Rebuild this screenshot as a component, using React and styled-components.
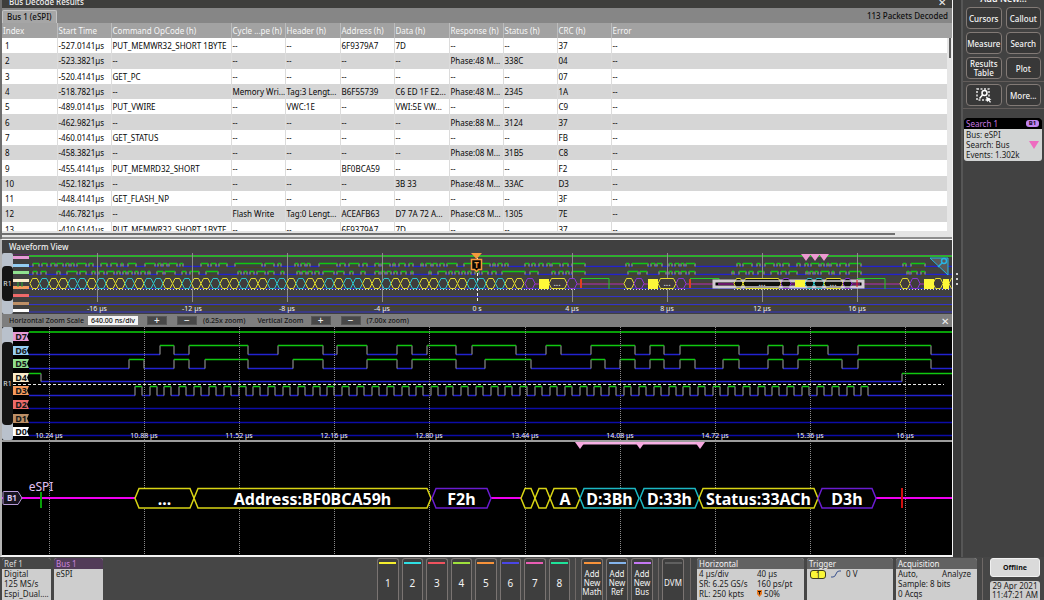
import React, { useState } from 'react'
import styled, { createGlobalStyle } from 'styled-components'

const decodeRows = [
  ['1', '-527.0141µs', 'PUT_MEMWR32_SHORT 1BYTE', '--', '--', '6F9379A7', '7D', '--', '--', '37', '--'],
  ['2', '-523.3821µs', '--', '--', '--', '--', '--', 'Phase:48 M...', '338C', '04', '--'],
  ['3', '-520.4141µs', 'GET_PC', '--', '--', '--', '--', '--', '--', '07', '--'],
  ['4', '-518.7821µs', '--', 'Memory Wri...', 'Tag:3 Lengt...', 'B6F55739', 'C6 ED 1F E2...', 'Phase:48 M...', '2345', '1A', '--'],
  ['5', '-489.0141µs', 'PUT_VWIRE', '--', 'VWC:1E', '--', 'VWI:5E VW...', '--', '--', 'C9', '--'],
  ['6', '-462.9821µs', '--', '--', '--', '--', '--', 'Phase:88 M...', '3124', '37', '--'],
  ['7', '-460.0141µs', 'GET_STATUS', '--', '--', '--', '--', '--', '--', 'FB', '--'],
  ['8', '-458.3821µs', '--', '--', '--', '--', '--', 'Phase:08 M...', '31B5', 'C8', '--'],
  ['9', '-455.4141µs', 'PUT_MEMRD32_SHORT', '--', '--', 'BF0BCA59', '--', '--', '--', 'F2', '--'],
  ['10', '-452.1821µs', '--', '--', '--', '--', '3B 33', 'Phase:48 M...', '33AC', 'D3', '--'],
  ['11', '-448.4141µs', 'GET_FLASH_NP', '--', '--', '--', '--', '--', '--', '3F', '--'],
  ['12', '-446.7821µs', '--', 'Flash Write', 'Tag:0 Lengt...', 'ACEAFB63', 'D7 7A 72 A...', 'Phase:C8 M...', '1305', '7E', '--'],
  ['13', '-410.6141µs', 'PUT_MEMWR32_SHORT 1BYTE', '--', '--', '6F9379A7', '7D', '--', '--', '37', '--'],
]

const columns = [
  ['Index', 55],
  ['Start Time', 54],
  ['Command OpCode (h)', 120],
  ['Cycle ...pe (h)', 54],
  ['Header (h)', 55],
  ['Address (h)', 54],
  ['Data (h)', 55],
  ['Response (h)', 54],
  ['Status (h)', 54],
  ['CRC (h)', 54],
  ['Error', null],
]

const lanes = [
  { name: 'D7', color: '#e79ad6' },
  { name: 'D6', color: '#93cdf3' },
  { name: 'D5', color: '#8fe08f' },
  { name: 'D4', color: '#fbeccb' },
  { name: 'D3', color: '#f79a5c' },
  { name: 'D2', color: '#ee6a6a' },
  { name: 'D1', color: '#bd8f66' },
  { name: 'D0', color: '#ffffff' },
]

// [start, end] of every high level
const d6 = [[160, 174], [189, 248], [278, 323], [337, 367], [397, 412], [427, 456], [472, 516], [546, 561], [591, 635], [650, 664], [680, 739], [768, 783], [798, 828], [858, 931]]
const d5 = [[129, 144], [174, 189], [205, 248], [293, 323], [367, 397], [412, 456], [485, 531], [591, 605], [620, 635], [650, 664], [680, 695], [723, 739], [768, 783], [798, 842], [858, 931]]
const d4 = [[29, 41], [902, 2400]]
const d3 = Array.from({ length: 50 }, (_, i) => {
  const x = Math.round(134.7 + i * 14.83)
  return [x, x + 7]
})

const overviewD6 = [[33, 39], [42, 47], [51, 55], [57, 63], [66, 69], [71, 74], [77, 86], [89, 93], [101, 107], [111, 117], [121, 123], [128, 136], [145, 155], [158, 161], [163, 167], [169, 177], [180, 183], [201, 208], [211, 216], [219, 227], [235, 262], [265, 274], [278, 281], [295, 298], [301, 305], [307, 310], [319, 337], [340, 345], [349, 359], [363, 367], [375, 379], [381, 390], [393, 395], [399, 405], [409, 413], [421, 423], [426, 431], [433, 437], [440, 444], [447, 457], [464, 490], [493, 495], [498, 502], [505, 508], [525, 529], [532, 535], [539, 543], [547, 550], [552, 560], [563, 568], [572, 585], [626, 629], [632, 648], [651, 655], [657, 662], [669, 672], [675, 679], [681, 684], [686, 695], [737, 740], [743, 752], [757, 760], [765, 774], [777, 780], [783, 789], [797, 800], [805, 808], [811, 819], [821, 824], [827, 829], [831, 837], [840, 846], [849, 861], [903, 906], [911, 925]]
const overviewD5 = [[33, 37], [41, 46], [57, 60], [67, 77], [80, 86], [92, 95], [99, 104], [107, 114], [117, 120], [123, 126], [128, 132], [135, 138], [141, 145], [148, 150], [157, 163], [165, 175], [182, 186], [190, 199], [206, 218], [238, 241], [244, 247], [250, 254], [257, 265], [268, 274], [281, 284], [297, 300], [302, 306], [308, 312], [315, 319], [323, 334], [337, 344], [350, 353], [361, 365], [375, 379], [381, 385], [387, 391], [394, 397], [401, 406], [411, 413], [429, 431], [438, 446], [449, 452], [455, 459], [462, 465], [468, 471], [475, 479], [482, 488], [492, 496], [502, 525], [530, 538], [552, 555], [559, 563], [566, 569], [572, 585], [628, 638], [640, 647], [659, 666], [669, 672], [675, 679], [681, 686], [689, 695], [732, 734], [739, 746], [749, 753], [758, 764], [771, 778], [781, 786], [789, 797], [806, 808], [810, 813], [815, 818], [821, 829], [832, 834], [840, 846], [849, 861], [907, 909], [911, 917], [921, 925]]

const YELLOW = '#d8d414'
const CYAN = '#1cb8c4'
const PURPLE = '#6a1cd0'

const packets = [
  { from: 135, to: 194, color: YELLOW, text: '...' },
  { from: 194, to: 431, color: YELLOW, text: 'Address:BF0BCA59h' },
  { from: 432, to: 491, color: PURPLE, text: 'F2h' },
  { from: 521, to: 535, color: YELLOW },
  { from: 535, to: 550, color: YELLOW },
  { from: 550, to: 580, color: YELLOW, text: 'A' },
  { from: 580, to: 639, color: CYAN, text: 'D:3Bh' },
  { from: 640, to: 699, color: CYAN, text: 'D:33h' },
  { from: 699, to: 818, color: YELLOW, text: 'Status:33ACh' },
  { from: 818, to: 876, color: PURPLE, text: 'D3h' },
]

const overviewPackets = [
  [525, 535, 'p'], [549, 567, 'y'], [567, 577, 'p'],
  [624, 634, 'y'], [634, 644, 'p'], [658, 676, 'y'], [676, 686, 'p'],
  [734, 743, 'y'], [743, 781, 'y'], [781, 791, 'p'],
  [805, 814, 'c'], [814, 824, 'c'], [824, 843, 'y'], [843, 852, 'p'],
  [900, 910, 'y'], [910, 920, 'p'], [933, 943, 'y'], [949, 959, 'y'],
]
const packetColor = { y: '#e2dc2c', c: '#2cc6cc', p: '#8a36d8' }

const gridTimes = ['10.24 µs', '10.88 µs', '11.52 µs', '12.16 µs', '12.80 µs', '13.44 µs', '14.08 µs', '14.72 µs', '15.36 µs', '16 µs']
const gridX = gridTimes.map((t, i) => Math.round(49 + i * 95.1))
const overviewTimes = ['-16 µs', '-12 µs', '-8 µs', '-4 µs', '0 s', '4 µs', '8 µs', '12 µs', '16 µs']

const channels = ['#f5ee2e', '#2fdfe4', '#f0525e', '#9fe03c', '#f7923a', '#4a46e6', '#ea5cb4', '#1fe39a']

function Wave({ highs, hi, lo, start = 29 }) {
  let green = ''
  let blue = ''
  let gray = ''
  let x = start
  highs.forEach(([a, b]) => {
    if (a > x) blue += `M${x} ${lo}H${a}`
    if (a > start) gray += `M${a} ${lo}V${hi}`
    green += `M${a} ${hi}H${b}`
    gray += `M${b} ${hi}V${lo}`
    x = b
  })
  blue += `M${x} ${lo}H2400`
  return (
    <g fill="none">
      <path d={blue} stroke="#2222d0" strokeWidth="1.500" />
      <path d={gray} stroke="#a4a4a4" />
      <path d={green} stroke="#10c810" strokeWidth="1.500" />
    </g>
  )
}

function Hex({ from, to, top, bottom, slant, color, fill, width = 1 }) {
  const mid = (top + bottom) / 2
  return (
    <path
      d={`M${from} ${mid}L${from + slant} ${top}H${to - slant}L${to} ${mid}L${to - slant} ${bottom}H${from + slant}Z`}
      stroke={color}
      strokeWidth={width}
      fill={fill}
    />
  )
}

function Overview() {
  const train = Array.from({ length: 52 }, (_, i) => 30 + i * 9.5)
  return (
    <Plot>
      <g transform="translate(-13 0)">
        <path d="M13 1.5H2400" stroke="#5a2a5e" />
        <path d="M29 14.5H2400M29 22.5H2400M29 30H2400M29 46H2400M29 53.5H2400" stroke="#4a441e" />
        <path d="M29 3H2400" stroke="#2fae2f" strokeWidth="2" />
        <Wave highs={overviewD6} hi={10.5} lo={13.5} />
        <Wave highs={overviewD5} hi={18.5} lo={21.5} />
        <path d="M29 35.5H2400M29 43.5H2400M29 51.5H2400M29 59H2400" stroke="#3434c8" strokeWidth="1" />
        {overviewTimes.map((t, i) => (
          <path
            key={t}
            d={`M${97 + i * 95}.5 0V49`}
            stroke={t === '0 s' ? '#f0f0f0' : '#8c8c8c'}
            strokeDasharray={t === '0 s' ? '3 2' : 'none'}
          />
        ))}
        <path d="M525 31H624M643 31H740M790 31H900M919 31H924" stroke="#b82cb8" strokeWidth="1" />
        <path d="M581 25.5H609V36M690 25.5H719V36M857 25.5H885V36" stroke="#28c828" fill="none" />
        <path d="M581 26V35M690 26V35" stroke="#e04020" strokeWidth="2" />
        {train.map((x, i) => (
          <Hex key={x} from={x} to={x + 9.5} top={25.5} bottom={35.5} slant={2.5} fill="#403c3c" color={i % 3 === 1 || i % 7 === 5 ? packetColor.c : packetColor.y} />
        ))}
        <rect x="714" y="28" width="149" height="6" fill="#000" stroke="#d0ccd0" strokeWidth="3" />
        <path d="M718 31H734M790 31H796M852 31H860" stroke="#d42cd4" />
        {overviewPackets.map(([a, b, c]) => (
          <Hex key={a} from={a} to={b} top={25.5} bottom={35.5} slant={2.5} fill={a > 713 && a < 860 ? '#10100c' : '#403c3c'} color={packetColor[c]} />
        ))}
        <path d="M718 28H861M718 34H861" stroke="#d0ccd0" strokeWidth="2" strokeOpacity=".75" />
        <path d="M857 27V34" stroke="#e02020" />
        <path d="M539 26h10v10h-10zM648 26h10v10h-10zM795 27h10v7h-10zM924 26h10v10h-10zM943 26h6v10h-6z" fill="#fdf838" />
        <path d="M32 36.5H525M526 36.5H577M624 36.5H686M734 36.5H853M900 36.5H950" stroke="#cfcfdf" strokeDasharray="1 2" />
        {[557, 667, 762, 833].map((x) => (
          <PlotText key={x} x={x} y="33" $size={9}>...</PlotText>
        ))}
        {lanes.map((l, i) => (
          <rect key={l.name} x="13" y={[3, 11, 18, 26, 33, 41, 49, 56][i]} width="16" height="3" fill={l.color} />
        ))}
        <path d="M22 29v5M18 29v5" stroke="#2fae2f" />
        {overviewTimes.map((t, i) => (
          <PlotText key={t} x={97 + i * 95} y="58" $size={7}>{t}</PlotText>
        ))}
        <path d="M801 1h10l-5 7zM810 1h10l-5 7zM819 1h10l-5 7z" fill="#ec98d0" />
        <path d="M471 0h11l-5.500 6z" fill="#f59a3c" />
        <path d="M471.500 6.500h10v10h-3l-2 2-2-2h-3z" fill="#0c0804" stroke="#f59a3c" strokeWidth="1.500" />
        <PlotText x="476.5" y="15" $size={8} $color="#f59a3c" $bold>T</PlotText>
        <path d="M930 5h18v17z" fill="#5a5a5a" stroke="#26b4e4" />
        <circle cx="944" cy="8" r="2.500" fill="none" stroke="#26b4e4" strokeWidth="1.500" />
        <path d="M942 10l-4 4" stroke="#26b4e4" strokeWidth="1.500" />
      </g>
    </Plot>
  )
}

function DigitalLanes() {
  const top = (i) => Math.round(5 + i * 13.6)
  return (
    <Plot>
      <g transform="translate(-13 0)">
        <path d="M29 5H2400" stroke="#08a008" strokeWidth="2" />
        <Wave highs={d6} hi={18.5} lo={27.5} />
        <Wave highs={d5} hi={32.5} lo={41.5} />
        <Wave highs={d4} hi={46.5} lo={54.5} />
        <Wave highs={d3} hi={59.5} lo={68.5} />
        <path d="M29 81.500H2400M29 95.500H2400M29 108.500H2400" stroke="#0c0ca8" strokeWidth="1.500" />
        {gridX.map((x) => (
          <path key={x} d={`M${x}.5 0V114`} stroke="#8a8a8a" strokeDasharray="1 1" />
        ))}
        <path d="M13 57.500H944" stroke="#e8e8e8" strokeDasharray="3 2" />
        {lanes.map((l, i) => (
          <g key={l.name}>
            <path d={`M13 ${top(i)}h16l-2 4.500l2 4.500h-16z`} fill={l.color} />
            <PlotText x="21" y={top(i) + 8} $size={9} $color="#181818" $bold>{l.name}</PlotText>
          </g>
        ))}
        {gridX.map((x, i) => (
          <PlotText key={x} x={x} y="111" $size={7}>{gridTimes[i]}</PlotText>
        ))}
      </g>
    </Plot>
  )
}

function BusLane() {
  return (
    <Plot>
      <g transform="translate(-2 -1)">
        {gridX.map((x) => (
          <path key={x} d={`M${x}.5 0V2000`} stroke="#8a8a8a" strokeDasharray="1 1" />
        ))}
        <path d="M577 2H702" stroke="#f6b0e4" strokeWidth="3" />
        {[580, 640, 700].map((x) => (
          <path key={x} d={`M${x - 5} 1h10l-5 7z`} fill="#f6a8e0" />
        ))}
        <path d="M2 57H135M491 57H521M876 57H2400" stroke="#f000f0" strokeWidth="2" />
        <path d="M41 51V67" stroke="#08a008" strokeWidth="2" />
        <path d="M902 47V67" stroke="#d01010" strokeWidth="2" />
        {packets.map((p) => (
          <g key={p.from}>
            <Hex from={p.from} to={p.to} top={47.5} bottom={67} slant={4} color={p.color} fill="#000" width={1.5} />
            {p.text && (
              <PlotText x={(p.from + p.to) / 2} y="64" $size={16} $color="#fff" $bold>{p.text}</PlotText>
            )}
          </g>
        ))}
        <PlotText x="41" y="50" $size={12} $color="#e0c0f4">eSPI</PlotText>
        <path d="M4 50.500h14l4 6.500l-4 6.500h-14q-1 0-1-1v-11q0-1 1-1z" fill="#181420" stroke="#b89cd8" />
        <PlotText x="12" y="60" $size={8} $color="#dcc8f0" $bold>B1</PlotText>
      </g>
    </Plot>
  )
}

function DecodeResults() {
  return (
    <ResultsPanel>
      <ResultsTitle>
        <span>Bus Decode Results</span>
        <CloseButton aria-label="Close results">✕</CloseButton>
      </ResultsTitle>
      <TabBar>
        <Tab>Bus 1 (eSPI)</Tab>
        <PacketCount>113 Packets Decoded</PacketCount>
      </TabBar>
      <TableWindow>
        <Table>
          <colgroup>
            {columns.map(([name, width]) => (
              <Col key={name} $width={width} />
            ))}
          </colgroup>
          <thead>
            <tr>
              {columns.map(([name]) => (
                <th key={name}>{name}</th>
              ))}
            </tr>
          </thead>
          <tbody>
            {decodeRows.map((row) => (
              <tr key={row[0]}>
                {row.map((cell, i) => (
                  <td key={i}>{cell}</td>
                ))}
              </tr>
            ))}
          </tbody>
        </Table>
        <ScrollTrack>
          <ScrollThumb />
        </ScrollTrack>
      </TableWindow>
      <BottomTrack>
        <BottomThumb />
      </BottomTrack>
    </ResultsPanel>
  )
}

function App() {
  const [zoomScale, setZoomScale] = useState('640.00 ns/div')
  return (
    <Screen>
      <GlobalStyle />
      <Workspace>
        <Views>
          <DecodeResults />
          <WaveformView>
            <ViewTitle>Waveform View</ViewTitle>
            <OverviewRow>
              <Rail><Pill $height={35}>R1</Pill></Rail>
              <Overview />
            </OverviewRow>
            <ZoomBar>
              <label htmlFor="scale">Horizontal Zoom Scale</label>
              <ScaleInput id="scale" value={zoomScale} onChange={(e) => setZoomScale(e.target.value)} />
              <StepButton aria-label="Horizontal zoom in">+</StepButton>
              <StepButton aria-label="Horizontal zoom out">−</StepButton>
              <ZoomNote>(6.25x zoom)</ZoomNote>
              <VerticalLabel>Vertical Zoom</VerticalLabel>
              <StepButton aria-label="Vertical zoom in">+</StepButton>
              <StepButton aria-label="Vertical zoom out">−</StepButton>
              <ZoomNote>(7.00x zoom)</ZoomNote>
              <CloseButton aria-label="Close zoom">✕</CloseButton>
            </ZoomBar>
            <DigitalRow>
              <Rail><Pill $height={83}>R1</Pill></Rail>
              <DigitalLanes />
            </DigitalRow>
            <BusRow>
              <BusLane />
            </BusRow>
          </WaveformView>
        </Views>
        <Splitter>
          <i /><i /><i />
        </Splitter>
        <Sidebar>
          <SidebarTitle>Add New...</SidebarTitle>
          <ButtonGrid>
            <SideButton>Cursors</SideButton>
            <SideButton>Callout</SideButton>
            <SideButton>Measure</SideButton>
            <SideButton>Search</SideButton>
            <SideButton>Results Table</SideButton>
            <SideButton>Plot</SideButton>
          </ButtonGrid>
          <ButtonGrid>
            <SideButton aria-label="Draw a box">
              <svg width="16" height="15" viewBox="0 0 16 15" fill="none">
                <rect x="1" y="1" width="12" height="11" stroke="#e8e8e8" strokeWidth="1.500" strokeDasharray="2 1.500" />
                <circle cx="8.500" cy="5" r="2.500" stroke="#fff" strokeWidth="1.500" />
                <path d="M6.500 7L3.500 10.500" stroke="#fff" strokeWidth="1.500" />
                <path d="M10 8.500l5.500 3-2 .5 1.500 2-1 .8-1.500-2-1.500 1.200z" fill="#fff" />
              </svg>
            </SideButton>
            <SideButton>More...</SideButton>
          </ButtonGrid>
          <SearchCard>
            <SearchHead>Search 1<SearchBadge>B1</SearchBadge></SearchHead>
            <SearchBody>
              <div>
                <p>Bus: eSPI</p>
                <p>Search: Bus</p>
                <p>Events: 1.302k</p>
              </div>
              <svg width="10" height="8"><path d="M0 0h10l-5 8z" fill="#ee6cc0" /></svg>
            </SearchBody>
          </SearchCard>
        </Sidebar>
      </Workspace>
      <SettingsBar>
        <Badge $width={49}>
          <BadgeHead $color="#d8d8d8">Ref 1</BadgeHead>
          <p>Digital</p>
          <p>125 MS/s</p>
          <p>Espi_Dual....</p>
        </Badge>
        <Badge $width={49}>
          <BadgeHead $bg="#523c58" $color="#c884dc">Bus 1</BadgeHead>
          <p>eSPI</p>
        </Badge>
        <Spacer />
        <Channels>
          {channels.map((c, i) => (
            <ChannelButton key={c} $color={c}>{i + 1}</ChannelButton>
          ))}
        </Channels>
        <AddButtons>
          <AddButton $color="#f7923a">Add New Math</AddButton>
          <AddButton $color="#84b4ec">Add New Ref</AddButton>
          <AddButton $color="#c478f4">Add New Bus</AddButton>
        </AddButtons>
        <DvmGroup>
          <AddButton $color="#606060">DVM</AddButton>
        </DvmGroup>
        <Badge $width={107}>
          <BadgeHead $bg="#626262">Horizontal</BadgeHead>
          <Pairs>
            <span>4 µs/div</span><span>40 µs</span>
            <span>SR: 6.25 GS/s</span><span>160 ps/pt</span>
            <span>RL: 250 kpts</span>
            <span>
              <svg width="5" height="7"><path d="M0 0h5v4l-2.500 3L0 4z" fill="#e87820" /><path d="M1 1.500h3M2.500 1.500v3" stroke="#201000" /></svg>
              {' '}50%
            </span>
          </Pairs>
        </Badge>
        <Badge $width={86}>
          <BadgeHead $bg="#626262">Trigger</BadgeHead>
          <TriggerLine>
            <Source>1</Source>
            <svg width="10" height="8"><path d="M0 7h2q2 0 3-3t3-3h2" fill="none" stroke="#38508c" /></svg>
            0 V
          </TriggerLine>
        </Badge>
        <Badge $width={81}>
          <BadgeHead $bg="#626262">Acquisition</BadgeHead>
          <Split><span>Auto,</span><span>Analyze</span></Split>
          <p>Sample: 8 bits</p>
          <p>0 Acqs</p>
        </Badge>
        <Status>
          <OfflineButton>Offline</OfflineButton>
          <Clock>
            <span>29 Apr 2021</span>
            <span>11:47:21 AM</span>
          </Clock>
        </Status>
      </SettingsBar>
    </Screen>
  )
}

export default App

const GlobalStyle = createGlobalStyle`
  *{
    box-sizing:border-box;
  }
  body{
    margin:0;
    background:#454545;
    font-family:"Noto Sans","Open Sans",sans-serif;
    font-size:8px;
    line-height:10px;
  }
  p{
    margin:0;
  }
  button, input{
    font:inherit;
    padding:0;
    margin:0;
  }
`
const Screen = styled.div`
  height:100vh;
  display:flex;
  flex-direction:column;
  overflow:hidden;
`
const Workspace = styled.main`
  flex:1;
  display:flex;
  min-width:0;
  min-height:0;
`
const Views = styled.div`
  flex:1;
  min-width:0;
  display:flex;
  flex-direction:column;
`
const ResultsPanel = styled.section`
  border-left:2px solid #6e6e6e;
  border-right:1px solid #f4f4f4;
`
const ResultsTitle = styled.div`
  height:8px;
  padding:0 6px 0 7px;
  display:flex;
  align-items:flex-end;
  justify-content:space-between;
  overflow:hidden;
  background:#3e3e3c;
  color:#f0f0f0;
  font-weight:500;
  line-height:12px;
`
const CloseButton = styled.button`
  border:0;
  background:none;
  color:#f0f0f0;
  font-size:10px;
  line-height:12px;
  margin-left:auto;
`
const TabBar = styled.div`
  height:15px;
  padding-right:4px;
  display:flex;
  align-items:flex-end;
  justify-content:space-between;
  background:#868686;
`
const Tab = styled.button`
  height:13px;
  padding:0 4px;
  border:1px solid #c4c4c4;
  border-bottom:0;
  border-radius:2px 2px 0 0;
  background:#a6a6a6;
  color:#101010;
  font-weight:500;
  line-height:12px;
`
const PacketCount = styled.span`
  line-height:15px;
  color:#101010;
  font-weight:500;
`
const TableWindow = styled.div`
  height:208px;
  display:flex;
  overflow:hidden;
  background:#fff;
`
const Table = styled.table`
  flex:1;
  width:100%;
  height:214px;
  table-layout:fixed;
  border-collapse:collapse;
  color:#080808;
  line-height:12px;

  th{
    height:15px;
    padding:1px 1px 0;
    text-align:left;
    font-weight:400;
    white-space:nowrap;
    color:#f6f6f6;
    background:#a2a2a2;
    border-left:1px solid #bcbcbc;
  }
  td{
    padding:1px 0 0 1px;
    white-space:nowrap;
    overflow:hidden;
    border-left:1px solid #dcdcdc;
  }
  th:first-child, td:first-child{
    border-left:0;
  }
  td:first-child{
    padding-left:3px;
  }
  tbody tr:nth-child(even){
    background:#d6d6d6;
  }
`
const Col = styled.col`
  width:${props => props.$width ? `${props.$width}px` : 'auto'};
`
const ScrollTrack = styled.div`
  width:5px;
  padding:15px 1px 0 2px;
  background:linear-gradient(#a2a2a2 15px, #e6e6e6 15px);
`
const ScrollThumb = styled.div`
  height:20px;
  background:#5c5c5c;
`
const BottomTrack = styled.div`
  height:8px;
  padding-top:2px;
  background:#e4e4e4;
  border-bottom:2px solid #8c8c8c;
`
const BottomThumb = styled.div`
  width:94%;
  height:2px;
  background:#707070;
`
const WaveformView = styled.section`
  flex:1;
  min-height:0;
  display:flex;
  flex-direction:column;
  border:1px solid #f4f4f4;
  border-left:2px solid #b4b4b4;
  border-bottom-width:2px;
  background:#000;
`
const ViewTitle = styled.h2`
  margin:0;
  height:13px;
  padding-left:7px;
  background:#404040;
  color:#f0f0f0;
  font-size:8px;
  font-weight:500;
  line-height:14px;
`
const OverviewRow = styled.div`
  height:61px;
  display:flex;
  background:#404040;
`
const DigitalRow = styled.div`
  height:115px;
  display:flex;
  border-bottom:2px solid #9c9c9c;
`
const BusRow = styled.div`
  flex:1;
  min-height:0;
  display:flex;
`
const Rail = styled.div`
  width:11px;
  display:flex;
  align-items:center;
  background:#b9c1cc;
  border-radius:2px;
`
const Pill = styled.div`
  width:11px;
  height:${props => props.$height}px;
  display:flex;
  align-items:center;
  justify-content:center;
  border-radius:4px;
  background:#141414;
  color:#e4e4e4;
  font-size:7px;
`
const Plot = styled.svg`
  flex:1;
  width:0;
  min-width:0;
  height:100%;
  overflow:hidden;
`
const PlotText = styled.text`
  font-size:${props => props.$size}px;
  font-weight:${props => props.$bold ? 700 : 400};
  fill:${props => props.$color || '#f0f0f0'};
  text-anchor:middle;
`
const ZoomBar = styled.div`
  height:13px;
  padding:0 3px 0 7px;
  display:flex;
  align-items:center;
  background:#7e7e7e;
  color:#161616;
  font-size:7px;
  font-weight:500;
`
const ScaleInput = styled.input`
  width:50px;
  height:9px;
  margin-left:4px;
  margin-right:9px;
  border:0;
  background:#f4f4f4;
  color:#101010;
  text-align:center;
`
const StepButton = styled.button`
  width:20px;
  height:9px;
  margin-right:10px;
  border:1px solid #585858;
  background:#484848;
  color:#f0f0f0;
  font-size:10px;
  line-height:7px;
`
const ZoomNote = styled.span`
  margin:0 12px 0 -4px;
`
const VerticalLabel = styled.span`
  margin-right:7px;
`
const Splitter = styled.div`
  width:10px;
  display:flex;
  flex-direction:column;
  align-items:center;
  justify-content:center;
  gap:3px;
  background:#3a3a3a;
  border-right:2px solid #565656;

  i{
    width:2px;
    height:2px;
    border-radius:1px;
    background:#fff;
  }
`
const Sidebar = styled.aside`
  width:81px;
  background:#424242;
`
const SidebarTitle = styled.div`
  height:5px;
  display:flex;
  align-items:flex-end;
  justify-content:center;
  overflow:hidden;
  color:#f4f4f4;
  font-size:9px;
  font-weight:600;
  line-height:12px;
`
const ButtonGrid = styled.div`
  padding:2px 3px;
  display:grid;
  grid-template-columns:1fr 1fr;
  gap:3px 4px;
  border-bottom:1px solid #625c5a;
`
const SideButton = styled.button`
  height:22px;
  min-width:0;
  display:flex;
  align-items:center;
  justify-content:center;
  border:1px solid #827a76;
  border-radius:4px;
  background:#383838;
  color:#f4f4f4;
  font-weight:500;
  line-height:9px;
`
const SearchCard = styled.div`
  margin:9px 2px 0 1px;
  border-radius:3px;
  overflow:hidden;
  background:#d2d4d4;
  color:#202020;
`
const SearchHead = styled.div`
  height:11px;
  padding:0 3px 0 2px;
  display:flex;
  align-items:center;
  justify-content:space-between;
  background:#000;
  color:#c878e0;
`
const SearchBadge = styled.span`
  width:13px;
  height:7px;
  border-radius:3px;
  background:#c084f0;
  color:#180828;
  font-size:6px;
  font-weight:700;
  line-height:7px;
  text-align:center;
`
const SearchBody = styled.div`
  height:32px;
  padding:0 3px 0 2px;
  display:flex;
  align-items:center;
  justify-content:space-between;
`
const SettingsBar = styled.footer`
  height:43px;
  padding:1px 4px 0 2px;
  display:flex;
  gap:3px;
  background:#464646;
`
const Badge = styled.div`
  width:${props => props.$width}px;
  border-radius:3px 3px 0 0;
  overflow:hidden;
  white-space:nowrap;
  background:#cecece;
  color:#1c1c1c;

  p{
    padding-left:2px;
  }
`
const BadgeHead = styled.div`
  height:11px;
  padding-left:2px;
  background:${props => props.$bg || '#464646'};
  color:${props => props.$color || '#f4f4f4'};
  line-height:11px;
`
const Spacer = styled.div`
  flex:1;
`
const Channels = styled.div`
  width:193px;
  display:grid;
  grid-template-columns:repeat(8, 1fr);
  gap:3px;
`
const ChannelButton = styled.button`
  display:flex;
  align-items:center;
  justify-content:center;
  border:1px solid #7a7472;
  border-bottom:0;
  border-radius:3px 3px 0 0;
  background:linear-gradient(${props => props.$color}, ${props => props.$color}) center 3px / 17px 2px no-repeat #3e3e3e;
  color:#f4f4f4;
  font-size:10px;
  padding-top:6px;
`
const AddButtons = styled.div`
  margin-left:2px;
  padding:0 5px;
  display:flex;
  gap:3px;
  border-left:1px solid #6e6866;
  border-right:1px solid #6e6866;
`
const AddButton = styled(ChannelButton)`
  width:22px;
  font-size:8px;
  line-height:9px;
`
const DvmGroup = styled.div`
  margin-right:3px;
  padding-right:6px;
  display:flex;
  border-right:1px solid #6e6866;
`
const Pairs = styled.div`
  padding-left:2px;
  display:grid;
  grid-template-columns:58px 1fr;
`
const TriggerLine = styled.div`
  padding-left:3px;
  display:flex;
  align-items:center;
  gap:5px;
`
const Source = styled.span`
  width:16px;
  height:9px;
  border:1px solid #3c3c20;
  border-radius:3px;
  background:#fbf738;
  line-height:7px;
  text-align:center;
`
const Split = styled.div`
  padding:0 6px 0 2px;
  display:flex;
  justify-content:space-between;
`
const Status = styled.div`
  width:58px;
  margin-left:2px;
  padding-left:7px;
  display:flex;
  flex-direction:column;
  gap:4px;
  border-left:1px solid #6e6866;
`
const OfflineButton = styled.button`
  height:19px;
  border:1px solid #f0f0f0;
  border-radius:3px;
  background:#dadada;
  color:#101010;
  font-size:7px;
  font-weight:700;
`
const Clock = styled.div`
  flex:1;
  display:flex;
  flex-direction:column;
  align-items:center;
  border-radius:3px 3px 0 0;
  background:#cecece;
  color:#1c1c1c;
  line-height:9px;
`
